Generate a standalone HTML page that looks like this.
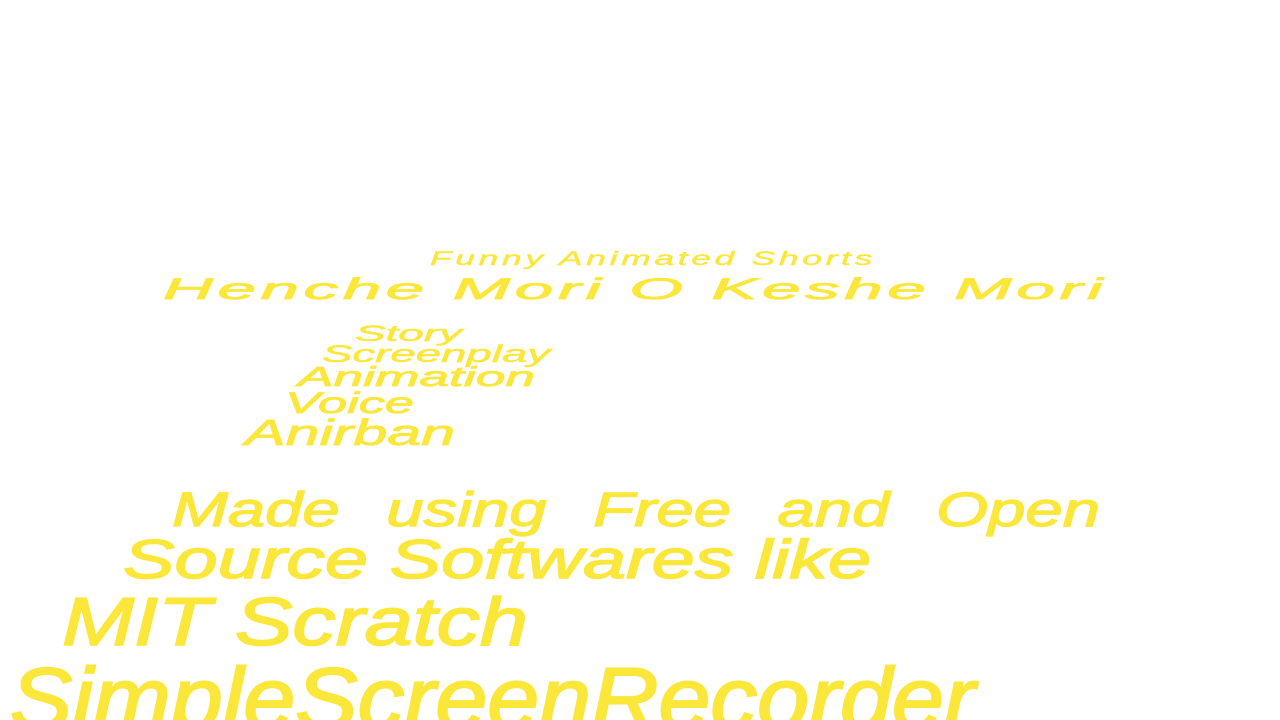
<!DOCTYPE html>
<html><head><meta charset="utf-8"><style>
html,body{margin:0;padding:0;background:#fff;width:1280px;height:720px;overflow:hidden}
svg text{font-family:"Liberation Sans",sans-serif;font-style:italic;fill:#fbe63a;stroke:#fbe63a;stroke-width:0.8}
</style></head><body>
<svg width="1280" height="720" viewBox="0 0 1280 720">
<text x="430" y="265" font-size="19" textLength="446" lengthAdjust="spacingAndGlyphs" letter-spacing="2" style="stroke-width:0.4">Funny Animated Shorts</text>
<text x="163" y="299" font-size="30" textLength="944" lengthAdjust="spacingAndGlyphs" letter-spacing="2">Henche Mori O Keshe Mori</text>
<text x="355" y="341" font-size="22" textLength="107" lengthAdjust="spacingAndGlyphs" style="stroke-width:0.5">Story</text>
<text x="322" y="362" font-size="24" textLength="228" lengthAdjust="spacingAndGlyphs" style="stroke-width:0.5">Screenplay</text>
<text x="298" y="386" font-size="28" textLength="237" lengthAdjust="spacingAndGlyphs">Animation</text>
<text x="285" y="413" font-size="30" textLength="129" lengthAdjust="spacingAndGlyphs">Voice</text>
<text x="245" y="445" font-size="36" textLength="210" lengthAdjust="spacingAndGlyphs">Anirban</text>
<text x="172" y="526" font-size="48" textLength="928" lengthAdjust="spacingAndGlyphs" word-spacing="20" style="stroke-width:1.2">Made using Free and Open</text>
<text x="123" y="578" font-size="55" textLength="748" lengthAdjust="spacingAndGlyphs" style="stroke-width:1.4">Source Softwares like</text>
<text x="62" y="645" font-size="68" textLength="466" lengthAdjust="spacingAndGlyphs" style="stroke-width:1.6">MIT Scratch</text>
<text x="10" y="728" font-size="86" textLength="965" lengthAdjust="spacingAndGlyphs" style="stroke-width:2">SimpleScreenRecorder</text>
</svg>
</body></html>
